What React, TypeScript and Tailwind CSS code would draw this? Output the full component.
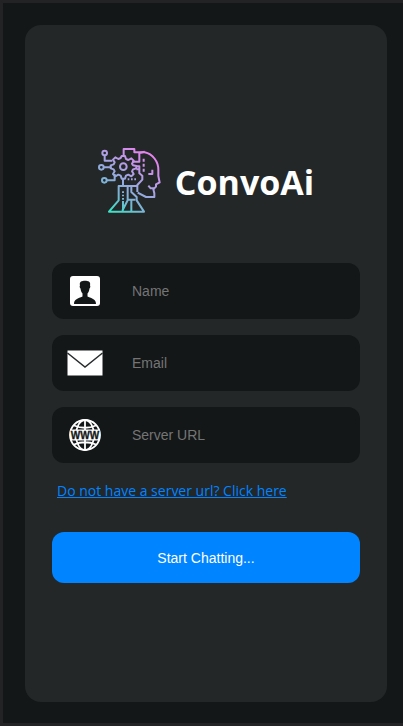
import type { ReactNode } from "react";

function Logo() {
  return (
    <svg viewBox="30 30 189 198" className="h-[66px] w-[63px] shrink-0" fill="none" stroke="url(#logo-gradient)" strokeWidth="6" strokeLinejoin="round" aria-hidden="true">
      <defs>
        <linearGradient id="logo-gradient" gradientUnits="userSpaceOnUse" x1="190" y1="60" x2="75" y2="222">
          <stop offset="0" stopColor="#e583ee" />
          <stop offset="0.45" stopColor="#a3a5e2" />
          <stop offset="0.75" stopColor="#77b5d3" />
          <stop offset="1" stopColor="#3fe0c5" />
        </linearGradient>
      </defs>
      <circle cx="50" cy="48" r="7" />
      <circle cx="40" cy="91" r="7" />
      <circle cx="49" cy="130" r="7" />
      <path d="M50 55V71H73M47 91H71M56 130H80V111" />
      <circle cx="106" cy="89" r="10" />
      <path d="M101 57H111L114 66L121 69L130 64L137 71L132 80L135 85L145 87V94L135 97L132 103L137 111L130 118L121 113L114 116L111 125H101L98 116L91 113L82 118L75 111L80 103L77 97L68 94V85L77 82L80 76L75 68L82 61L91 66L98 63Z" />
      <path d="M107 57V36H139V46H170C194 51 211 73 211 98V117L215 136L204 142V149L196 157L199 169V180H174L149 167" />
      <path d="M132 74H154V48L170 44M145 88H154V109L163 116V128L148 144V165M145 97H154" />
      <path d="M167 65V104" strokeDasharray="9 6" />
      <path d="M181 111H193V98M181 146L188 154H200" />
      <path d="M119 127H146" strokeDasharray="5 5" />
      <path d="M105 125V147M148 147H92V190L63 224H168L146 190V180L130 165V147M119 147V190L103 221M119 188H142M130 190V223" />
      <path d="M105 163V188" strokeDasharray="5 5" />
      <path d="M105 192V220" />
    </svg>
  );
}

function PortraitIcon() {
  return (
    <svg viewBox="0 0 30 30" className="size-[30px]" aria-hidden="true">
      <rect width="30" height="30" rx="3" fill="white" />
      <path d="M4 28C4 23 8 22.500 12.500 20.500V17.500C11 16 10.800 14 10.500 12.500C9.500 11.500 9.500 10 10 9.500C9 5.500 12 4.800 15 4.800S21 5.500 20 9.500C20.500 10 20.500 11.500 19.500 12.500C19.200 14 19 16 17.500 17.500V20.500C22 22.500 26 23 26 28Z" fill="#131718" />
    </svg>
  );
}

function EnvelopeIcon() {
  return (
    <svg viewBox="0 0 36 26" className="h-[26px] w-9" aria-hidden="true">
      <path d="M0.500 0.500H35.500V25.500H0.500Z" fill="white" />
      <path d="M0.500 3L18 17L35.500 3" fill="none" stroke="#292c2d" strokeWidth="1.500" />
    </svg>
  );
}

function GlobeIcon() {
  return (
    <svg viewBox="0 0 32 32" className="size-8" aria-hidden="true">
      <g fill="none" stroke="white" strokeWidth="1.800">
        <circle cx="16" cy="16" r="15" />
        <ellipse cx="16" cy="16" rx="9" ry="15" />
        <path d="M16 1V31M5 6.500Q16 11 27 6.500M5 25.500Q16 21 27 25.500M2 11.500H30M2 20.500H30" />
      </g>
      <rect x="1" y="11.500" width="30" height="9" fill="white" />
      <text x="16" y="19.500" textAnchor="middle" fontFamily="Liberation Sans, Arial, sans-serif" fontSize="10" fontWeight="700" fill="#131718" stroke="#131718" strokeWidth="0.300">WWW</text>
    </svg>
  );
}

function Field({ id, label, type, icon }: { id: string; label: string; type: string; icon: ReactNode }) {
  return (
    <div className="flex h-14 items-center rounded-xl bg-[#131718]">
      <label htmlFor={id} aria-label={label} className="flex w-[66px] shrink-0 justify-center">
        {icon}
      </label>
      <input
        id={id}
        type={type}
        placeholder={label}
        className="ml-[14px] h-full min-w-0 flex-1 bg-transparent pr-4 font-['Liberation_Sans',Arial,sans-serif] text-sm text-white outline-none placeholder:text-[#757575]"
      />
    </div>
  );
}

export default function App() {
  return (
    <div className="flex min-h-screen border-y-3 border-l-3 border-[#232326] bg-[#131718] pt-[22px] pr-4 pb-[21px] pl-[22px]">
      <main className="flex flex-1 flex-col justify-center rounded-2xl bg-[#232728] px-[27px] pt-[3px]">
        <header className="mb-[50px] flex items-center justify-center gap-[14px]">
          <Logo />
          <h1 className="pt-1 font-['Open_Sans','Noto_Sans',sans-serif] text-[34px] leading-10 font-bold text-white">ConvoAi</h1>
        </header>
        <form className="flex flex-col gap-4" onSubmit={(event) => event.preventDefault()}>
          <Field id="name" label="Name" type="text" icon={<PortraitIcon />} />
          <Field id="email" label="Email" type="email" icon={<EnvelopeIcon />} />
          <Field id="server-url" label="Server URL" type="url" icon={<GlobeIcon />} />
          <a href="#server" className="self-start pl-[5px] font-['Open_Sans','Noto_Sans',sans-serif] text-sm leading-6 text-[#0084ff] underline">
            Do not have a server url? Click here
          </a>
          <button type="submit" className="mt-[13px] h-[51px] rounded-xl bg-[#0084ff] font-['Liberation_Sans',Arial,sans-serif] text-sm text-white">
            Start Chatting...
          </button>
        </form>
      </main>
    </div>
  );
}
